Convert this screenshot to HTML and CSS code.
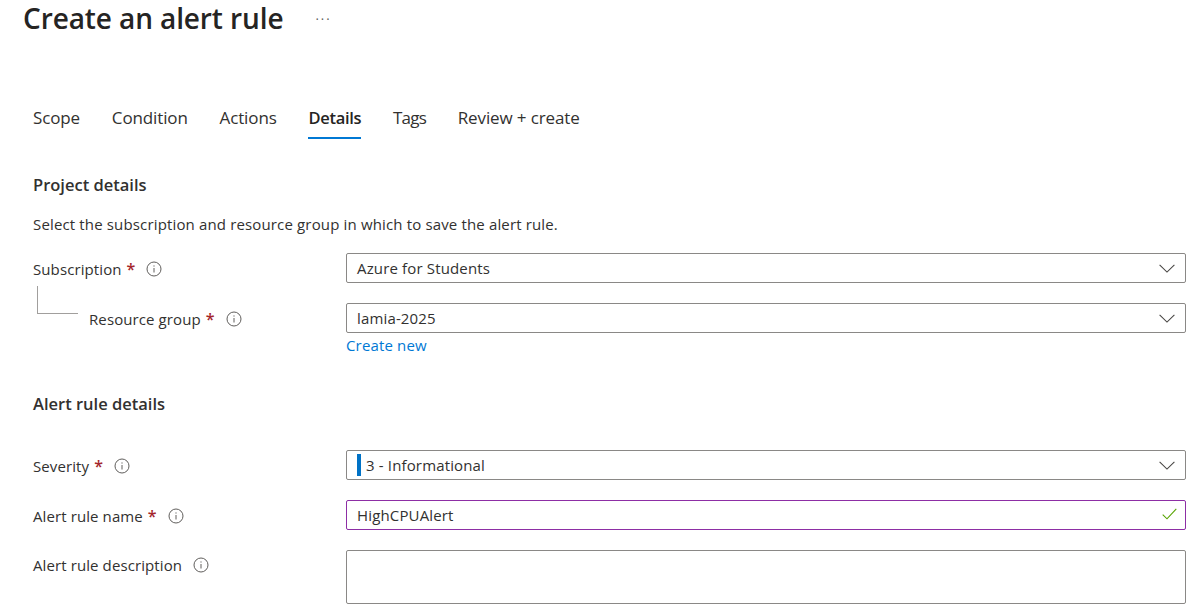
FILE: index.html
```html
<!DOCTYPE html>
<html lang="en">

<head>
    <meta charset="UTF-8">
    <title>Create an alert rule</title>
    <link rel="stylesheet" href="styles.css">
</head>

<body>

    <!-- page title -->
    <header class="titleBar">
        <h1 class="pageTitle">Create an alert rule</h1>
        <span class="moreDots">...</span>
    </header>

    <!-- tabs -->
    <nav class="tabs">
        <a class="tab">Scope</a>
        <a class="tab">Condition</a>
        <a class="tab">Actions</a>
        <a class="tab tabActive">Details</a>
        <a class="tab tabTags">Tags</a>
        <a class="tab">Review + create</a>
    </nav>

    <main class="content">
        <h2 class="sectionTitle">Project details</h2>
        <p class="sectionText">Select the subscription and resource group in which to save the alert rule.</p>

        <div class="formRow rowSubscription">
            <div class="fieldLabel">
                <span>Subscription</span><span class="required">*</span>
                <svg class="infoIcon" viewBox="0 0 16 16"><circle cx="8" cy="8" r="7"/><path d="M8 7v4.5M8 4.4v1.2"/></svg>
            </div>
            <div class="field selectBox">
                <span>Azure for Students</span>
                <svg class="chevron" viewBox="0 0 16 9"><path d="M.6.8 8 8.1 15.4.8"/></svg>
            </div>
        </div>

        <div class="formRow">
            <div class="fieldLabel labelNested">
                <span class="treeLine"></span>
                <span>Resource group</span><span class="required">*</span>
                <svg class="infoIcon" viewBox="0 0 16 16"><circle cx="8" cy="8" r="7"/><path d="M8 7v4.5M8 4.4v1.2"/></svg>
            </div>
            <div class="fieldWrap">
                <div class="field selectBox">
                    <span>lamia-2025</span>
                    <svg class="chevron" viewBox="0 0 16 9"><path d="M.6.8 8 8.1 15.4.8"/></svg>
                </div>
                <a class="createLink">Create new</a>
            </div>
        </div>

        <h2 class="sectionTitle titleRule">Alert rule details</h2>

        <div class="formRow rowSeverity">
            <div class="fieldLabel">
                <span>Severity</span><span class="required">*</span>
                <svg class="infoIcon" viewBox="0 0 16 16"><circle cx="8" cy="8" r="7"/><path d="M8 7v4.5M8 4.4v1.2"/></svg>
            </div>
            <div class="field selectBox">
                <span class="severityValue"><span class="severityBar"></span>3 - Informational</span>
                <svg class="chevron" viewBox="0 0 16 9"><path d="M.6.8 8 8.1 15.4.8"/></svg>
            </div>
        </div>

        <div class="formRow">
            <div class="fieldLabel">
                <span>Alert rule name</span><span class="required">*</span>
                <svg class="infoIcon" viewBox="0 0 16 16"><circle cx="8" cy="8" r="7"/><path d="M8 7v4.5M8 4.4v1.2"/></svg>
            </div>
            <div class="field fieldEdited">
                <span>HighCPUAlert</span>
                <svg class="checkIcon" viewBox="0 0 15 12"><path d="M.7 6.6 5 10.8 14.3.8"/></svg>
            </div>
        </div>

        <div class="formRow">
            <div class="fieldLabel labelPlain">
                <span>Alert rule description</span>
                <svg class="infoIcon" viewBox="0 0 16 16"><circle cx="8" cy="8" r="7"/><path d="M8 7v4.5M8 4.4v1.2"/></svg>
            </div>
            <div class="field textArea"></div>
        </div>
    </main>

</body>

</html>
```

FILE: styles.css
```css
html, body {
    margin: 0;
    height: 611px;
    overflow: hidden;
}

body {
    background-color: #fff;
    color: #323130;
    font-family: "Open Sans", "Noto Sans", sans-serif;
    font-size: 15px;
    letter-spacing: 0.15px;
}

/* page title */
.titleBar {
    display: flex;
    align-items: flex-start;
    height: 100px;
    padding-left: 23px;
}

.pageTitle {
    margin: 0;
    font-size: 28px;
    line-height: 36px;
    font-weight: 600;
    letter-spacing: -0.1px;
    color: #252423;
}

.moreDots {
    margin-left: 32px;
    font-size: 13px;
    line-height: 30px;
    letter-spacing: 2px;
    color: #605e5c;
}

/* tabs */
.tabs {
    display: flex;
    height: 39px;
    padding-left: 33px;
    gap: 31.75px;
}

.tab {
    height: 37px;
    line-height: 36px;
    font-size: 17px;
    letter-spacing: -0.12px;
    white-space: nowrap;
}

.tabActive {
    font-size: 16.5px;
    font-weight: 600;
    letter-spacing: -0.3px;
    color: #252423;
    border-bottom: 2px solid #0078d4;
}

.tabTags {
    letter-spacing: -0.8px;
}

.content {
    padding: 0 5px 0 33px;
}

.sectionTitle {
    margin: 35px 0 0;
    font-size: 16.5px;
    line-height: 22px;
    font-weight: 600;
    letter-spacing: 0;
}

.sectionText {
    margin: 18px 0 0;
    line-height: 20px;
}

.titleRule {
    margin-top: 38px;
}

/* form rows */
.formRow {
    display: flex;
    align-items: flex-start;
    margin-top: 20px;
}

.rowSubscription {
    margin-top: 19px;
}

.rowSeverity {
    margin-top: 35px;
}

.fieldLabel {
    box-sizing: border-box;
    position: relative;
    display: flex;
    align-items: center;
    flex: none;
    width: 313px;
    height: 30px;
    padding-top: 2px;
    letter-spacing: 0.1px;
}

.labelPlain {
    padding-top: 0;
}

.labelNested {
    padding-top: 1px;
    padding-left: 56px;
}

/* corner line between subscription and resource group */
.treeLine {
    position: absolute;
    left: 4px;
    top: -17px;
    width: 40px;
    height: 27px;
    border-left: 1px solid #a19f9d;
    border-bottom: 1px solid #a19f9d;
}

.required {
    margin-left: 5px;
    color: #a4262c;
    font-size: 16px;
    font-weight: 600;
}

.infoIcon {
    width: 16px;
    height: 16px;
    margin-left: 11px;
    fill: none;
    stroke: #605e5c;
    stroke-width: 1;
}

.fieldWrap {
    flex: 1;
}

.field {
    box-sizing: border-box;
    display: flex;
    align-items: center;
    justify-content: space-between;
    flex: 1;
    height: 30px;
    padding: 0 10px;
    border: 1px solid #8a8886;
    border-radius: 2px;
}

.fieldEdited {
    border-color: #8d2ea5;
}

.textArea {
    height: 54px;
}

.selectBox .chevron {
    width: 16px;
    height: 9px;
    fill: none;
    stroke: #484644;
    stroke-width: 1.1;
}

.checkIcon {
    width: 15px;
    height: 12px;
    margin: -3px -2px 0 0;
    fill: none;
    stroke: #57a300;
    stroke-width: 1.1;
}

.severityValue {
    display: flex;
    align-items: center;
}

.severityBar {
    width: 4px;
    height: 22px;
    margin-right: 5px;
    background-color: #0072c6;
}

.createLink {
    display: block;
    margin-top: 2px;
    line-height: 20px;
    color: #0078d4;
}
```
